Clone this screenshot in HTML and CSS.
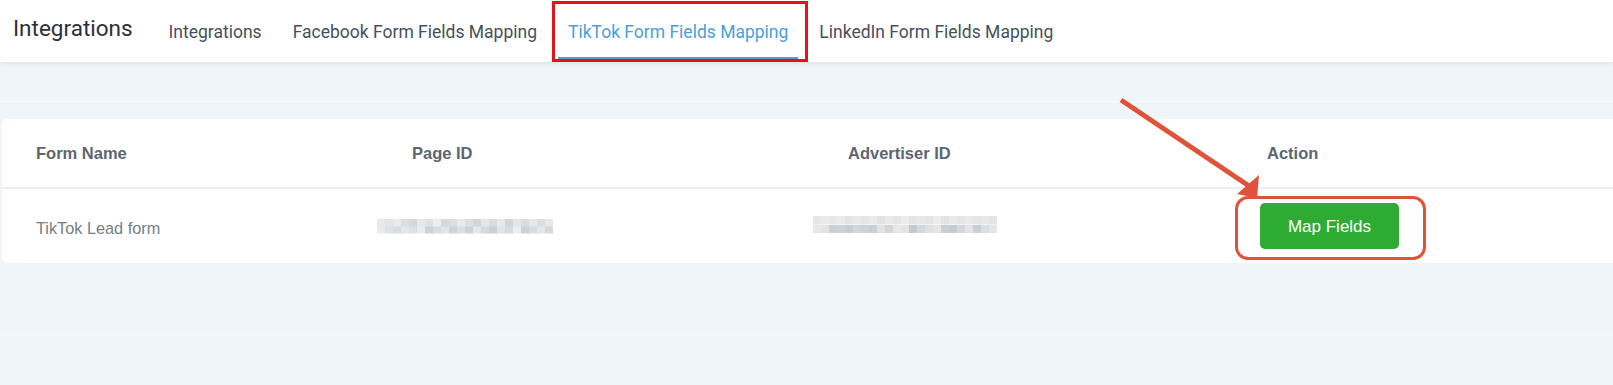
FILE: index.html
```html
<!DOCTYPE html>
<html lang="en">
<head>
<meta charset="utf-8">
<title>Integrations</title>
<link rel="stylesheet" href="styles.css">
</head>
<body>
<header class="topbar">
  <h1 class="title">Integrations</h1>
  <nav class="tabs">
    <a class="tab">Integrations</a>
    <a class="tab">Facebook Form Fields Mapping</a>
    <a class="tab active">TikTok Form Fields Mapping<span class="tab-callout"></span></a>
    <a class="tab">LinkedIn Form Fields Mapping</a>
  </nav>
</header>
<main class="content">
  <div class="strip"></div>
  <section class="panel">
    <div class="card">
      <div class="row row-head">
        <div class="th th-1">Form Name</div>
        <div class="th th-2">Page ID</div>
        <div class="th th-3">Advertiser ID</div>
        <div class="th th-4">Action</div>
      </div>
      <div class="row row-body">
        <div class="td td-name">TikTok Lead form</div>
        <div class="td"><span class="mosaic mosaic-page"></span></div>
        <div class="td"><span class="mosaic mosaic-adv"></span></div>
        <div class="td">
          <span class="btn-wrap">
            <button class="map-btn">Map Fields</button>
            <span class="btn-ring"></span>
          </span>
        </div>
      </div>
    </div>
  </section>
  <div class="bottom"></div>
</main>
<svg class="arrow" width="180" height="120" viewBox="0 0 180 120">
  <line x1="21" y1="10" x2="149" y2="96" stroke="#e0533b" stroke-width="5" stroke-linecap="butt"/>
  <polygon points="159,85 157,108 137,104" fill="#e0533b"/>
</svg>
</body>
</html>
```

FILE: styles.css
```css
html, body {
  margin: 0;
  padding: 0;
}

body {
  position: relative;
  width: 1613px;
  height: 385px;
  overflow: hidden;
  background: #f0f5f9;
  font-family: Roboto, "Liberation Sans", sans-serif;
}

.topbar {
  position: relative;
  z-index: 1;
  display: flex;
  height: 62px;
  background: #ffffff;
  box-shadow: 0 1px 5px rgba(40, 50, 60, 0.12);
}

.title {
  margin: 0;
  padding: 15px 0 0 13px;
  font-size: 22.5px;
  font-weight: 400;
  line-height: normal;
  color: #2a3037;
  white-space: nowrap;
}

.tabs {
  display: flex;
  gap: 11px;
  margin-left: 26px;
}

.tab {
  position: relative;
  box-sizing: border-box;
  height: 59px;
  padding: 21.5px 10px 0;
  font-size: 17.5px;
  line-height: normal;
  color: #46505c;
  border-bottom: 2.5px solid transparent;
  white-space: nowrap;
  text-decoration: none;
}

.tab.active {
  color: #4a9fd6;
  border-bottom-color: #5a9bc7;
}

.tab-callout {
  position: absolute;
  left: -6px;
  right: -10px;
  top: 1px;
  bottom: -4.5px;
  border: 3.5px solid #e2131b;
}

.strip {
  height: 39px;
  border-bottom: 1px solid #f9fbfd;
}

.panel {
  padding: 17px 0 72px 2px;
  border-bottom: 1px solid #f9fbfd;
}

.card {
  background: #ffffff;
  border-radius: 5px 0 0 5px;
  font-family: "Liberation Sans", Arial, sans-serif;
}

.row {
  display: grid;
  grid-template-columns: 375px 436px 447px 1fr;
  align-items: center;
}

.row-head {
  height: 68px;
  border-bottom: 2px solid #eef1f3;
}

.row-body {
  height: 74px;
}

.th {
  font-size: 16.5px;
  font-weight: 700;
  color: #5b6671;
}

.th-1 { padding-left: 34px; }
.th-2 { padding-left: 35px; }
.th-3 { padding-left: 35px; }
.th-4 { padding-left: 7px; }

.td {
  display: flex;
  align-items: center;
}

.td-name {
  padding: 4px 0 0 34px;
  font-size: 16.3px;
  color: #747d86;
}

.mosaic {
  display: block;
  filter: blur(0.7px);
}

.mosaic-page {
  width: 176px;
  height: 15px;
  background:
    linear-gradient(90deg,
      #e7e9eb 0 8px, #e2e4e6 8px 16px, #e9ebec 16px 24px, #dcdfe2 24px 32px,
      #d6d9dc 32px 40px, #e6e8ea 40px 48px, #dfe2e4 48px 56px, #ecedee 56px 64px,
      #d5d8db 64px 72px, #dcdfe1 72px 80px, #e8eaeb 80px 88px, #dee1e3 88px 96px,
      #d3d6d9 96px 104px, #e5e7e9 104px 112px, #d9dcdf 112px 120px, #e7e9ea 120px 128px,
      #d2d6d9 128px 136px, #e3e5e7 136px 144px, #dadde0 144px 152px, #e6e8ea 152px 160px,
      #dcdfe1 160px 168px, #e7e9eb 168px 176px) top / 100% 50% no-repeat,
    linear-gradient(90deg,
      #e9ebec 0 8px, #dfe2e4 8px 16px, #d9dce0 16px 24px, #e5e7e9 24px 32px,
      #dde0e2 32px 40px, #e9ebec 40px 48px, #ced2d5 48px 56px, #dadde0 56px 64px,
      #e4e6e8 64px 72px, #d0d4d7 72px 80px, #dcdfe2 80px 88px, #cfd3d6 88px 96px,
      #e6e8ea 96px 104px, #d6d9dc 104px 112px, #cdd1d4 112px 120px, #e2e4e6 120px 128px,
      #d8dbde 128px 136px, #eceeef 136px 144px, #cdd1d5 144px 152px, #d9dce0 152px 160px,
      #e4e6e8 160px 168px, #d6d9dc 168px 176px) bottom / 100% 50% no-repeat;
}

.mosaic-adv {
  width: 184px;
  height: 17px;
  margin-bottom: 3px;
  background:
    linear-gradient(90deg,
      #e3e5e7 0 8px, #e8eaeb 8px 16px, #e5e7e9 16px 24px, #e9ebec 24px 32px,
      #e2e4e6 32px 40px, #e7e9eb 40px 48px, #e4e6e8 48px 56px, #e9eaec 56px 64px,
      #e1e3e6 64px 72px, #e8e9eb 72px 80px, #e4e6e8 80px 88px, #ebeced 88px 96px,
      #e2e4e6 96px 104px, #e6e8ea 104px 112px, #e3e5e7 112px 120px, #e9ebec 120px 128px,
      #e1e4e6 128px 136px, #e7e9ea 136px 144px, #e4e6e8 144px 152px, #e8eaeb 152px 160px,
      #e3e5e7 160px 168px, #e6e8ea 168px 176px, #e2e4e6 176px 184px) top / 100% 50% no-repeat,
    linear-gradient(90deg,
      #e5e7e9 0 8px, #e2e4e6 8px 16px, #cbcfd2 16px 24px, #cfd2d5 24px 32px,
      #c9cdd0 32px 40px, #d3d6d9 40px 48px, #cfd2d6 48px 56px, #cbcfd2 56px 64px,
      #e1e3e5 64px 72px, #d4d7da 72px 80px, #e5e7e9 80px 88px, #e2e4e6 88px 96px,
      #c5c9cd 96px 104px, #d6d9dc 104px 112px, #dfe1e4 112px 120px, #e4e6e8 120px 128px,
      #cbcfd2 128px 136px, #c8ccd0 136px 144px, #d5d8db 144px 152px, #e2e4e6 152px 160px,
      #cbcfd3 160px 168px, #dcdfe1 168px 176px, #e3e5e7 176px 184px) bottom / 100% 50% no-repeat;
}

.btn-wrap {
  position: relative;
  display: inline-block;
}

.map-btn {
  display: block;
  width: 139px;
  height: 46px;
  padding: 2px 0 0;
  border: 0;
  border-radius: 5px;
  background: #2eab33;
  color: #ffffff;
  font-family: "Liberation Sans", Arial, sans-serif;
  font-size: 17px;
}

.btn-ring {
  position: absolute;
  left: -25px;
  top: -7.5px;
  right: -26.5px;
  bottom: -11px;
  border: 3px solid #e0533b;
  border-radius: 13px;
}

.arrow {
  position: absolute;
  left: 1100px;
  top: 90px;
  z-index: 2;
  overflow: visible;
}
```
